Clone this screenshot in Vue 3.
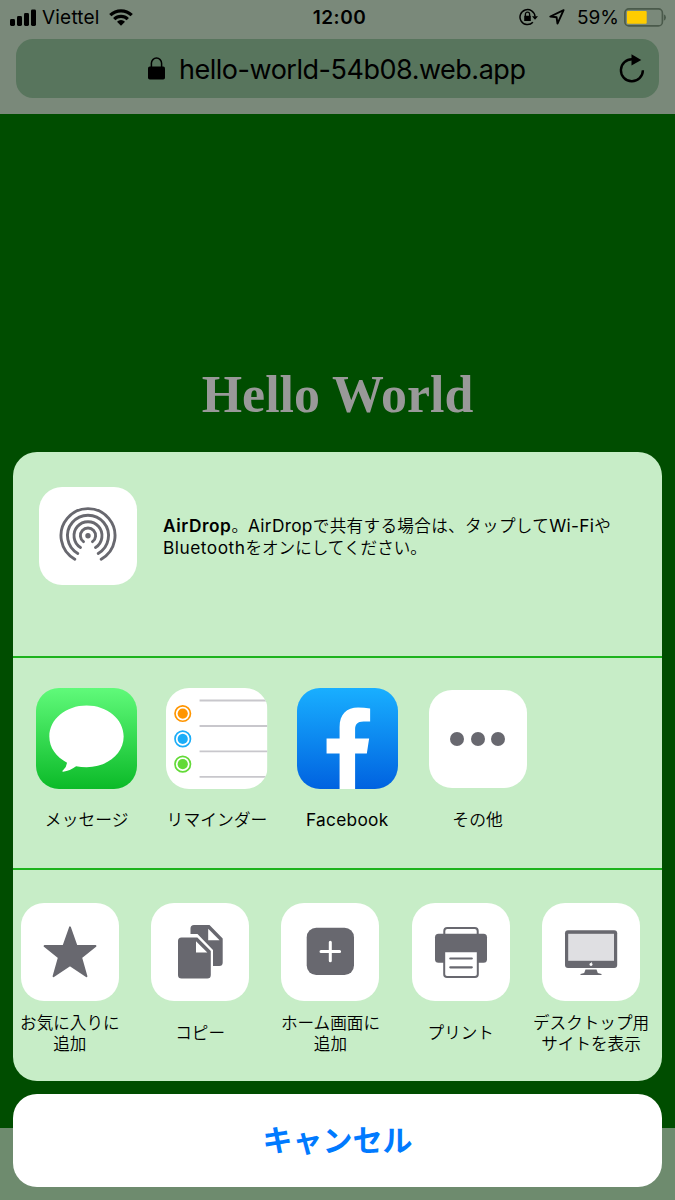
<script setup>
const apps = [
  { id: 'messages', label: 'メッセージ' },
  { id: 'reminders', label: 'リマインダー' },
  { id: 'facebook', label: 'Facebook' },
  { id: 'more', label: 'その他' },
]
const actions = [
  { id: 'star', lines: ['お気に入りに', '追加'] },
  { id: 'copy', lines: ['コピー'] },
  { id: 'home', lines: ['ホーム画面に', '追加'] },
  { id: 'print', lines: ['プリント'] },
  { id: 'desktop', lines: ['デスクトップ用', 'サイトを表示'] },
]
const reminders = [
  { y: 25.5, color: '#ff9500' },
  { y: 50.8, color: '#1badf8' },
  { y: 76, color: '#63da38' },
]
</script>

<template>
  <div class="screen">
    <header class="chrome">
      <div class="status">
        <div class="side left">
          <svg class="signal" width="27" height="17" viewBox="0 0 27 17">
            <rect x="0" y="10" width="5" height="7" rx="1.4" />
            <rect x="7" y="7" width="5" height="10" rx="1.4" />
            <rect x="14" y="4" width="5" height="13" rx="1.4" />
            <rect x="21" y="0.5" width="5" height="16.500" rx="1.4" />
          </svg>
          <span class="carrier">Viettel</span>
          <svg class="wifi" width="24" height="17" viewBox="0 0 24 17">
            <path d="M1.300 6.200a15.300 15.300 0 0 1 21.400 0M5.200 10.100a9.700 9.700 0 0 1 13.600 0" fill="none" stroke="#000" stroke-width="3.200" />
            <path d="M12 16.700 8 12.700a5.700 5.700 0 0 1 8 0z" />
          </svg>
        </div>
        <span class="time">12:00</span>
        <div class="side right">
          <svg class="rotation" width="19" height="18" viewBox="0 0 19 18">
            <path d="M13.900 14.300A7.500 7.500 0 1 1 16 8.500" fill="none" stroke="#000" stroke-width="1.500" />
            <path d="M13 8.300h6l-3 3.500zM5.200 7.800h6.600v5.200H5.200z" />
            <path d="M6.400 8V6.300a2.100 2.100 0 0 1 4.200 0V8" fill="none" stroke="#000" stroke-width="1.300" />
          </svg>
          <svg class="location" width="16" height="16" viewBox="0 0 16 16">
            <path d="M14.600 1.200 1.300 7.500l6.300.8.900 6.300z" fill="none" stroke="#000" stroke-width="1.900" stroke-linejoin="round" />
          </svg>
          <span class="percent">59%</span>
          <svg class="battery" width="42" height="19" viewBox="0 0 42 19">
            <rect x="0.900" y="0.900" width="37.500" height="17" rx="4" fill="none" stroke="#4a5a4b" stroke-width="1.600" />
            <rect x="3" y="3" width="19.700" height="12.800" rx="1" fill="#ffcc00" />
            <path d="M39.800 6.300q2.200 1 2.200 3.200t-2.200 3.200z" fill="#4a5a4b" />
          </svg>
        </div>
      </div>
      <div class="address">
        <svg class="lock" width="17" height="23" viewBox="0 0 17 23">
          <rect x="0" y="9.500" width="17" height="13" rx="1.800" />
          <path d="M3.400 10V6.200a5.100 5.100 0 0 1 10.200 0V10" fill="none" stroke="#000" stroke-width="1.500" />
        </svg>
        <span class="url">hello-world-54b08.web.app</span>
        <svg class="reload" width="26" height="30" viewBox="0 0 26 30">
          <path d="M13.500 5.300A11 11 0 1 0 23.900 16.300" fill="none" stroke="#000" stroke-width="2.400" />
          <path d="M12.500 0.300v11.200l9.800-5.600z" />
        </svg>
      </div>
    </header>
    <main class="page"><h1>Hello World</h1></main>
    <footer class="toolbar"></footer>

    <div class="overlay">
      <section class="sheet">
        <div class="airdrop">
          <div class="tile">
            <svg width="98" height="98" viewBox="0 0 98 98" fill="none" stroke="#68686f" stroke-width="2.900" stroke-linecap="round">
              <circle cx="49" cy="48.700" r="2.700" fill="#68686f" stroke="none" />
              <path d="M44.500 54.700a7.600 7.600 0 1 1 9 0" />
              <path d="M41.500 60.500a14 14 0 1 1 15 0" />
              <path d="M38.800 66.500a20.500 20.500 0 1 1 20.400 0" />
              <path d="M35.800 72.200a27 27 0 1 1 26.400 0" />
            </svg>
          </div>
          <p><b>AirDrop</b>。<span class="latin">AirDrop</span><span class="jp">で共有する場合は、タップして</span><span class="latin">Wi-Fi</span>や<br><span class="latin wide">Bluetooth</span>をオンにしてください。</p>
        </div>

        <div class="row apps">
          <div v-for="app in apps" :key="app.id" class="cell">
            <div class="icon-slot">
              <svg v-if="app.id === 'messages'" class="app-icon" viewBox="0 0 101 101">
                <defs><linearGradient id="msg" x2="0" y2="1"><stop stop-color="#60fa7a" /><stop offset="1" stop-color="#0bba28" /></linearGradient></defs>
                <rect width="101" height="101" fill="url(#msg)" />
                <path d="M50.500 17.500C71 17.500 87.500 31 87.500 48.500S71 79 50.500 79q-5.500 0-10.500-1-6 4.500-13 5.500-1.500-.2 0-1.500 3.500-3.200 4-7.500C20 69 13.300 59.500 13.300 48.500c0-17.500 16.700-31 37.200-31z" fill="#fff" />
              </svg>
              <svg v-else-if="app.id === 'reminders'" class="app-icon" viewBox="0 0 101 101">
                <rect width="101" height="101" fill="#fff" />
                <path d="M33.500 12.500H101M33.500 38H101M33.500 63.300H101M33.500 88.700H101" stroke="#c8c7cc" stroke-width="1.900" />
                <g v-for="r in reminders" :key="r.y">
                  <circle cx="16.700" :cy="r.y" r="7.700" fill="none" :stroke="r.color" stroke-width="1.700" />
                  <circle cx="16.700" :cy="r.y" r="5.100" :fill="r.color" />
                </g>
              </svg>
              <svg v-else-if="app.id === 'facebook'" class="app-icon" viewBox="0 0 101 101">
                <defs><linearGradient id="fb" x2="0" y2="1"><stop stop-color="#19afff" /><stop offset="1" stop-color="#0062e0" /></linearGradient></defs>
                <rect width="101" height="101" fill="url(#fb)" />
                <path d="M42.500 101V65.500H29.500v-15h13V39C42.500 26 49.500 19.500 61 19.500q6 0 12 1v13h-6.500c-6.500 0-8.500 3-8.500 8v9h14l-2.300 15H58V101z" fill="#fff" />
              </svg>
              <div v-else class="tile dots"><i></i><i></i><i></i></div>
            </div>
            <div :class="['label', app.id]">{{ app.label }}</div>
          </div>
        </div>

        <div class="row actions">
          <div v-for="action in actions" :key="action.id" class="cell">
            <div class="tile">
              <svg width="98" height="98" viewBox="0 0 98 98" fill="#68686f">
                <path v-if="action.id === 'star'" d="M49 24.300 55.600 43H74.500L60.200 54.500 65.500 73.300 49 62.300 32.500 73.300 37.800 54.500 23.500 43H42.400z" stroke="#68686f" stroke-width="1.800" stroke-linejoin="round" />
                <g v-else-if="action.id === 'copy'">
                  <path d="M39.500 31v-5.500q0-3.500 3.500-3.500h15.500L71.700 35.500V59.500q0 3.500-3.500 3.500H62V47L46.500 31z" />
                  <path d="M57.200 25.800v11.400h11.400z" fill="#fff" />
                  <path d="M30.500 34.500h15.800L59.800 48v24q0 3.500-3.500 3.500H30.500Q27 75.500 27 72V38q0-3.500 3.500-3.500z" />
                  <path d="M45 38.200v11.300h11.300z" fill="#fff" />
                </g>
                <g v-else-if="action.id === 'home'">
                  <rect x="25.700" y="24.800" width="47.300" height="47.300" rx="9.500" />
                  <path d="M49.300 39.200v18.600M40 48.500h18.600" stroke="#fff" stroke-width="3" stroke-linecap="round" />
                </g>
                <g v-else-if="action.id === 'print'">
                  <rect x="32.300" y="25" width="33.400" height="12" rx="3" fill="#fff" stroke="#68686f" stroke-width="2" />
                  <rect x="23" y="30.700" width="52" height="29" rx="3.500" />
                  <path d="M32.200 48.200h33.600v23q0 2.800-2.800 2.800H35q-2.800 0-2.800-2.800z" fill="#fff" stroke="#68686f" stroke-width="2" />
                  <path d="M38.300 55.500h21.500M38.300 64.300h21.500" stroke="#68686f" stroke-width="2.200" stroke-linecap="round" />
                </g>
                <g v-else>
                  <rect x="23" y="27.300" width="52.200" height="37.700" rx="3" />
                  <rect x="26.200" y="30.800" width="45.800" height="27" fill="#dfdfe2" />
                  <ellipse cx="49" cy="61.500" rx="1.500" ry="1.400" fill="#fff" />
                  <path d="m49 59.800 1.100-1-.2 1.300z" fill="#fff" />
                  <path d="M43.500 66.500h11l1.300 3.600 3.700 1v.8H38.500v-.8l3.700-1z" />
                </g>
              </svg>
            </div>
            <div class="caption"><span v-for="line in action.lines" :key="line">{{ line }}</span></div>
          </div>
        </div>
      </section>
      <button class="cancel">キャンセル</button>
    </div>
  </div>
</template>

<style>
body { margin: 0; }
</style>

<style scoped>
* { box-sizing: border-box; }
svg { display: block; flex: none; }
.screen {
  position: relative;
  display: flex;
  flex-direction: column;
  width: 675px;
  height: 1200px;
  overflow: hidden;
  background: #004d00;
  color: #000;
  font-family: Inter, "Noto Sans CJK JP", sans-serif;
}
.chrome { height: 114px; background: #7a897a; }
.status {
  display: grid;
  grid-template-columns: 1fr auto 1fr;
  align-items: center;
  height: 34px;
  padding: 0 9px 0 10px;
  font-size: 19px;
  line-height: 34px;
}
.side { display: flex; align-items: center; }
.signal { margin-top: -1px; }
.right { justify-content: flex-end; }
.carrier { margin-left: 5px; padding-top: 1px; letter-spacing: 0.2px; }
.wifi { margin: -1px 0 0 9px; }
.time { padding: 1px 0 0 3px; font-weight: 600; letter-spacing: 0.5px; }
.rotation { margin: -1px 1px 0 0; }
.location { margin: -1px 0 0 10px; }
.percent { margin-left: 12px; padding-top: 1px; }
.battery { margin: -1px 0 0 5px; }
.address {
  display: flex;
  align-items: center;
  height: 59px;
  margin: 5px 16px 0;
  padding: 0 14px 0 132px;
  border-radius: 17px;
  background: #58755d;
}
.url { margin-left: 14px; padding-top: 1px; font-size: 27px; letter-spacing: -0.480px; white-space: nowrap; }
.reload { margin-left: auto; }
.page { flex: 1; background: #004d00; }
h1 {
  margin: 251px 0 0;
  text-align: center;
  color: #999;
  font: bold 51.900px/60px "Liberation Serif", serif;
}
.toolbar { height: 72px; background: #6e8b6e; }
.overlay {
  position: absolute;
  top: 452px;
  left: 13px;
  width: 649px;
  display: flex;
  flex-direction: column;
  gap: 13px;
}
.sheet {
  height: 629px;
  border-radius: 24px;
  background: #c7edc7;
  overflow: hidden;
}
.airdrop {
  display: flex;
  height: 206px;
  padding: 35px 0 0 26px;
  border-bottom: 2px solid #1db31d;
}
.tile {
  flex: none;
  width: 98px;
  height: 98px;
  border-radius: 23px;
  background: #fff;
}
.airdrop p {
  margin: 27.500px 0 0 26px;
  font-size: 16.600px;
  font-weight: 350;
  line-height: 21.300px;
  white-space: nowrap;
}
b { font-size: 17.300px; font-weight: 600; letter-spacing: 0.550px; }
.latin { font-size: 17.300px; font-weight: 400; letter-spacing: 0.300px; }
.wide { letter-spacing: 0.500px; }
.jp { letter-spacing: 0.330px; }
.row { display: flex; }
.cell { flex: none; width: 130.300px; display: flex; flex-direction: column; align-items: center; }
.apps { height: 212px; padding: 30px 0 0 8.500px; border-bottom: 2px solid #1db31d; }
.icon-slot { display: flex; align-items: center; height: 101.500px; }
.app-icon { width: 101.200px; height: 101.200px; border-radius: 23px; }
.dots { display: flex; align-items: center; justify-content: center; gap: 6.800px; }
.dots i { width: 14px; height: 14px; border-radius: 50%; background: #68686f; }
.label { margin-top: 19px; font-size: 16.800px; font-weight: 350; line-height: 22px; white-space: nowrap; }
.label.facebook { font-size: 17.300px; font-weight: 400; letter-spacing: 0.300px; }
.actions { margin-left: -8.300px; padding-top: 32.600px; }
.caption {
  display: flex;
  flex-direction: column;
  align-items: center;
  justify-content: center;
  height: 42px;
  margin-top: 12px;
  font-size: 16.600px;
  font-weight: 350;
  line-height: 21px;
  white-space: nowrap;
}
.cancel {
  height: 93px;
  border: 0;
  border-radius: 24px;
  background: #fff;
  color: #007aff;
  font: 600 30px/93px Inter, "Noto Sans CJK JP", sans-serif;
  padding: 0;
}
</style>
